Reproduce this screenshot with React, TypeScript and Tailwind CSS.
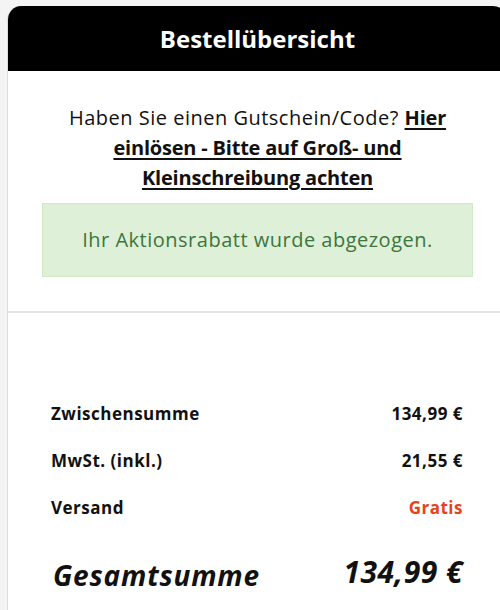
import React from "react";

export default function App() {
  return (
    <div className="w-[500px] h-[610px] overflow-hidden bg-[#f4f4f4] pt-[6px] pl-[7px]" style={{ fontFamily: "'Open Sans', Lato, sans-serif" }}>
      <div className="w-[500px] h-[620px] bg-white border-l border-[#dcdcdc] rounded-t-[14px] overflow-hidden flex flex-col">
        <div className="h-[65px] bg-black flex items-center justify-center">
          <h2 className="text-white font-bold text-[24px] tracking-[0px]">Bestellübersicht</h2>
        </div>
        <div className="pt-[32px] px-[34px] pb-[34px] border-b-2 border-[#e4e4e4]">
          <p className="mx-auto w-[400px] text-center text-[20px] leading-[30px] text-[#111] tracking-[0.5px]">
            Haben Sie einen Gutschein/Code?{" "}
            <a className="font-bold underline underline-offset-[3px] decoration-[1.5px] tracking-[-0.2px]">Hier einlösen - Bitte auf Groß- und Kleinschreibung achten</a>
          </p>
          <div className="mt-[10px] w-[431px] h-[74px] bg-[#dff0d8] border border-[#d0e9c6] flex items-center justify-center text-[#3c763d] text-[20px] tracking-[0.5px]">
            Ihr Aktionsrabatt wurde abgezogen.
          </div>
        </div>
        <div className="pl-[43px] w-[455px] pt-[77px] flex flex-col">
          <div className="flex justify-between items-center h-[47px] font-bold text-[17px] tracking-[0.5px] text-[#111]">
            <span>Zwischensumme</span>
            <span>134,99 €</span>
          </div>
          <div className="flex justify-between items-center h-[47px] font-bold text-[17px] tracking-[0.5px] text-[#111]">
            <span>MwSt. (inkl.)</span>
            <span>21,55 €</span>
          </div>
          <div className="flex justify-between items-center h-[47px] font-bold text-[17px] tracking-[0.5px] text-[#111]">
            <span>Versand</span>
            <span className="text-[#e4431e]">Gratis</span>
          </div>
          <div className="flex justify-between items-start mt-[18px] font-bold italic text-[#111]">
            <span className="text-[28px] tracking-[0.8px] mt-[5px] ml-[2px]">Gesamtsumme</span>
            <span className="text-[30px] tracking-[0.5px]">134,99 €</span>
          </div>
        </div>
      </div>
    </div>
  );
}
